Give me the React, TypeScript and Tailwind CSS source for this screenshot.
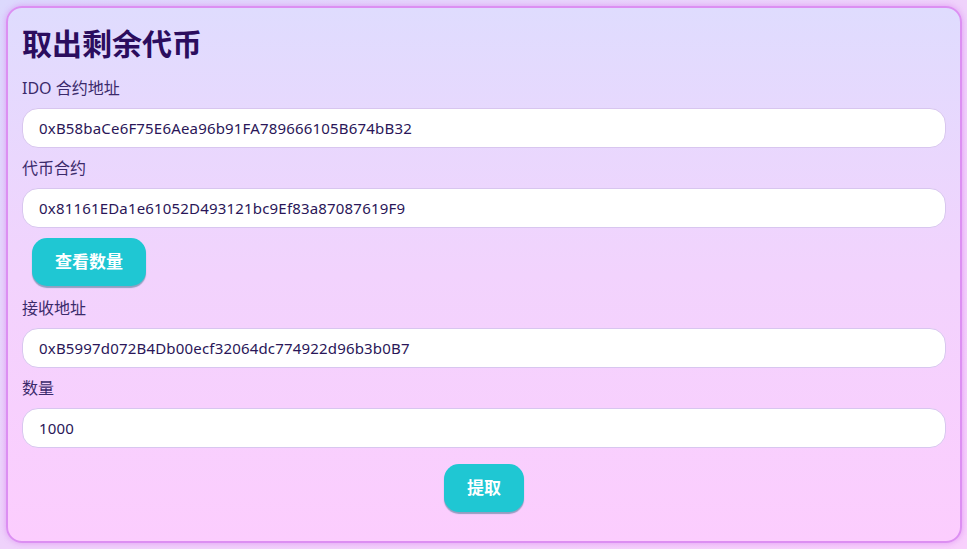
import React from "react";

const font = { fontFamily: '"Noto Sans", "Noto Sans CJK SC", sans-serif' };

function Field({ label, value }: { label: string; value: string }) {
  return (
    <div className="flex flex-col">
      <label className="h-6 text-[16px] leading-6 text-[#3b2a6b]">{label}</label>
      <input
        readOnly
        value={value}
        className="mt-2 mb-2 h-10 w-full rounded-[16px] border border-[#d8c6ef] bg-white px-4 text-[15px] tracking-[0.18px] text-[#2a1658] outline-none"
      />
    </div>
  );
}

export default function App() {
  return (
    <div
      className="h-[549px] w-[967px] bg-gradient-to-br from-[#dcd9fd] via-[#efd2fb] to-[#f8d0fc] p-[6px]"
      style={font}
    >
      <div className="h-[537px] w-[956px] rounded-[16px] border-2 border-[#dc8ff2] bg-gradient-to-b from-[#dfdcfe] via-[#f2d3fd] to-[#fccdfe] px-[14px] pt-[16px] shadow-[0_0_6px_rgba(214,120,240,0.6)]">
        <h1 className="h-[52px] text-[30px] font-bold leading-[40px] text-[#2b0d5e]">取出剩余代币</h1>
        <Field label="IDO 合约地址" value="0xB58baCe6F75E6Aea96b91FA789666105B674bB32" />
        <Field label="代币合约" value="0x81161EDa1e61052D493121bc9Ef83a87087619F9" />
        <button className="mx-[10px] mt-[2px] mb-[10px] h-[48px] w-[114px] rounded-[15px] bg-[#1fc7d3] text-[17px] font-bold text-white shadow-[0_2px_1px_rgba(20,100,120,0.45)]">
          查看数量
        </button>
        <Field label="接收地址" value="0xB5997d072B4Db00ecf32064dc774922d96b3b0B7" />
        <Field label="数量" value="1000" />
        <div className="mt-[8px] flex justify-center">
          <button className="h-[48px] w-[80px] rounded-[15px] bg-[#1fc7d3] text-[17px] font-bold text-white shadow-[0_2px_1px_rgba(20,100,120,0.45)]">
            提取
          </button>
        </div>
      </div>
    </div>
  );
}
